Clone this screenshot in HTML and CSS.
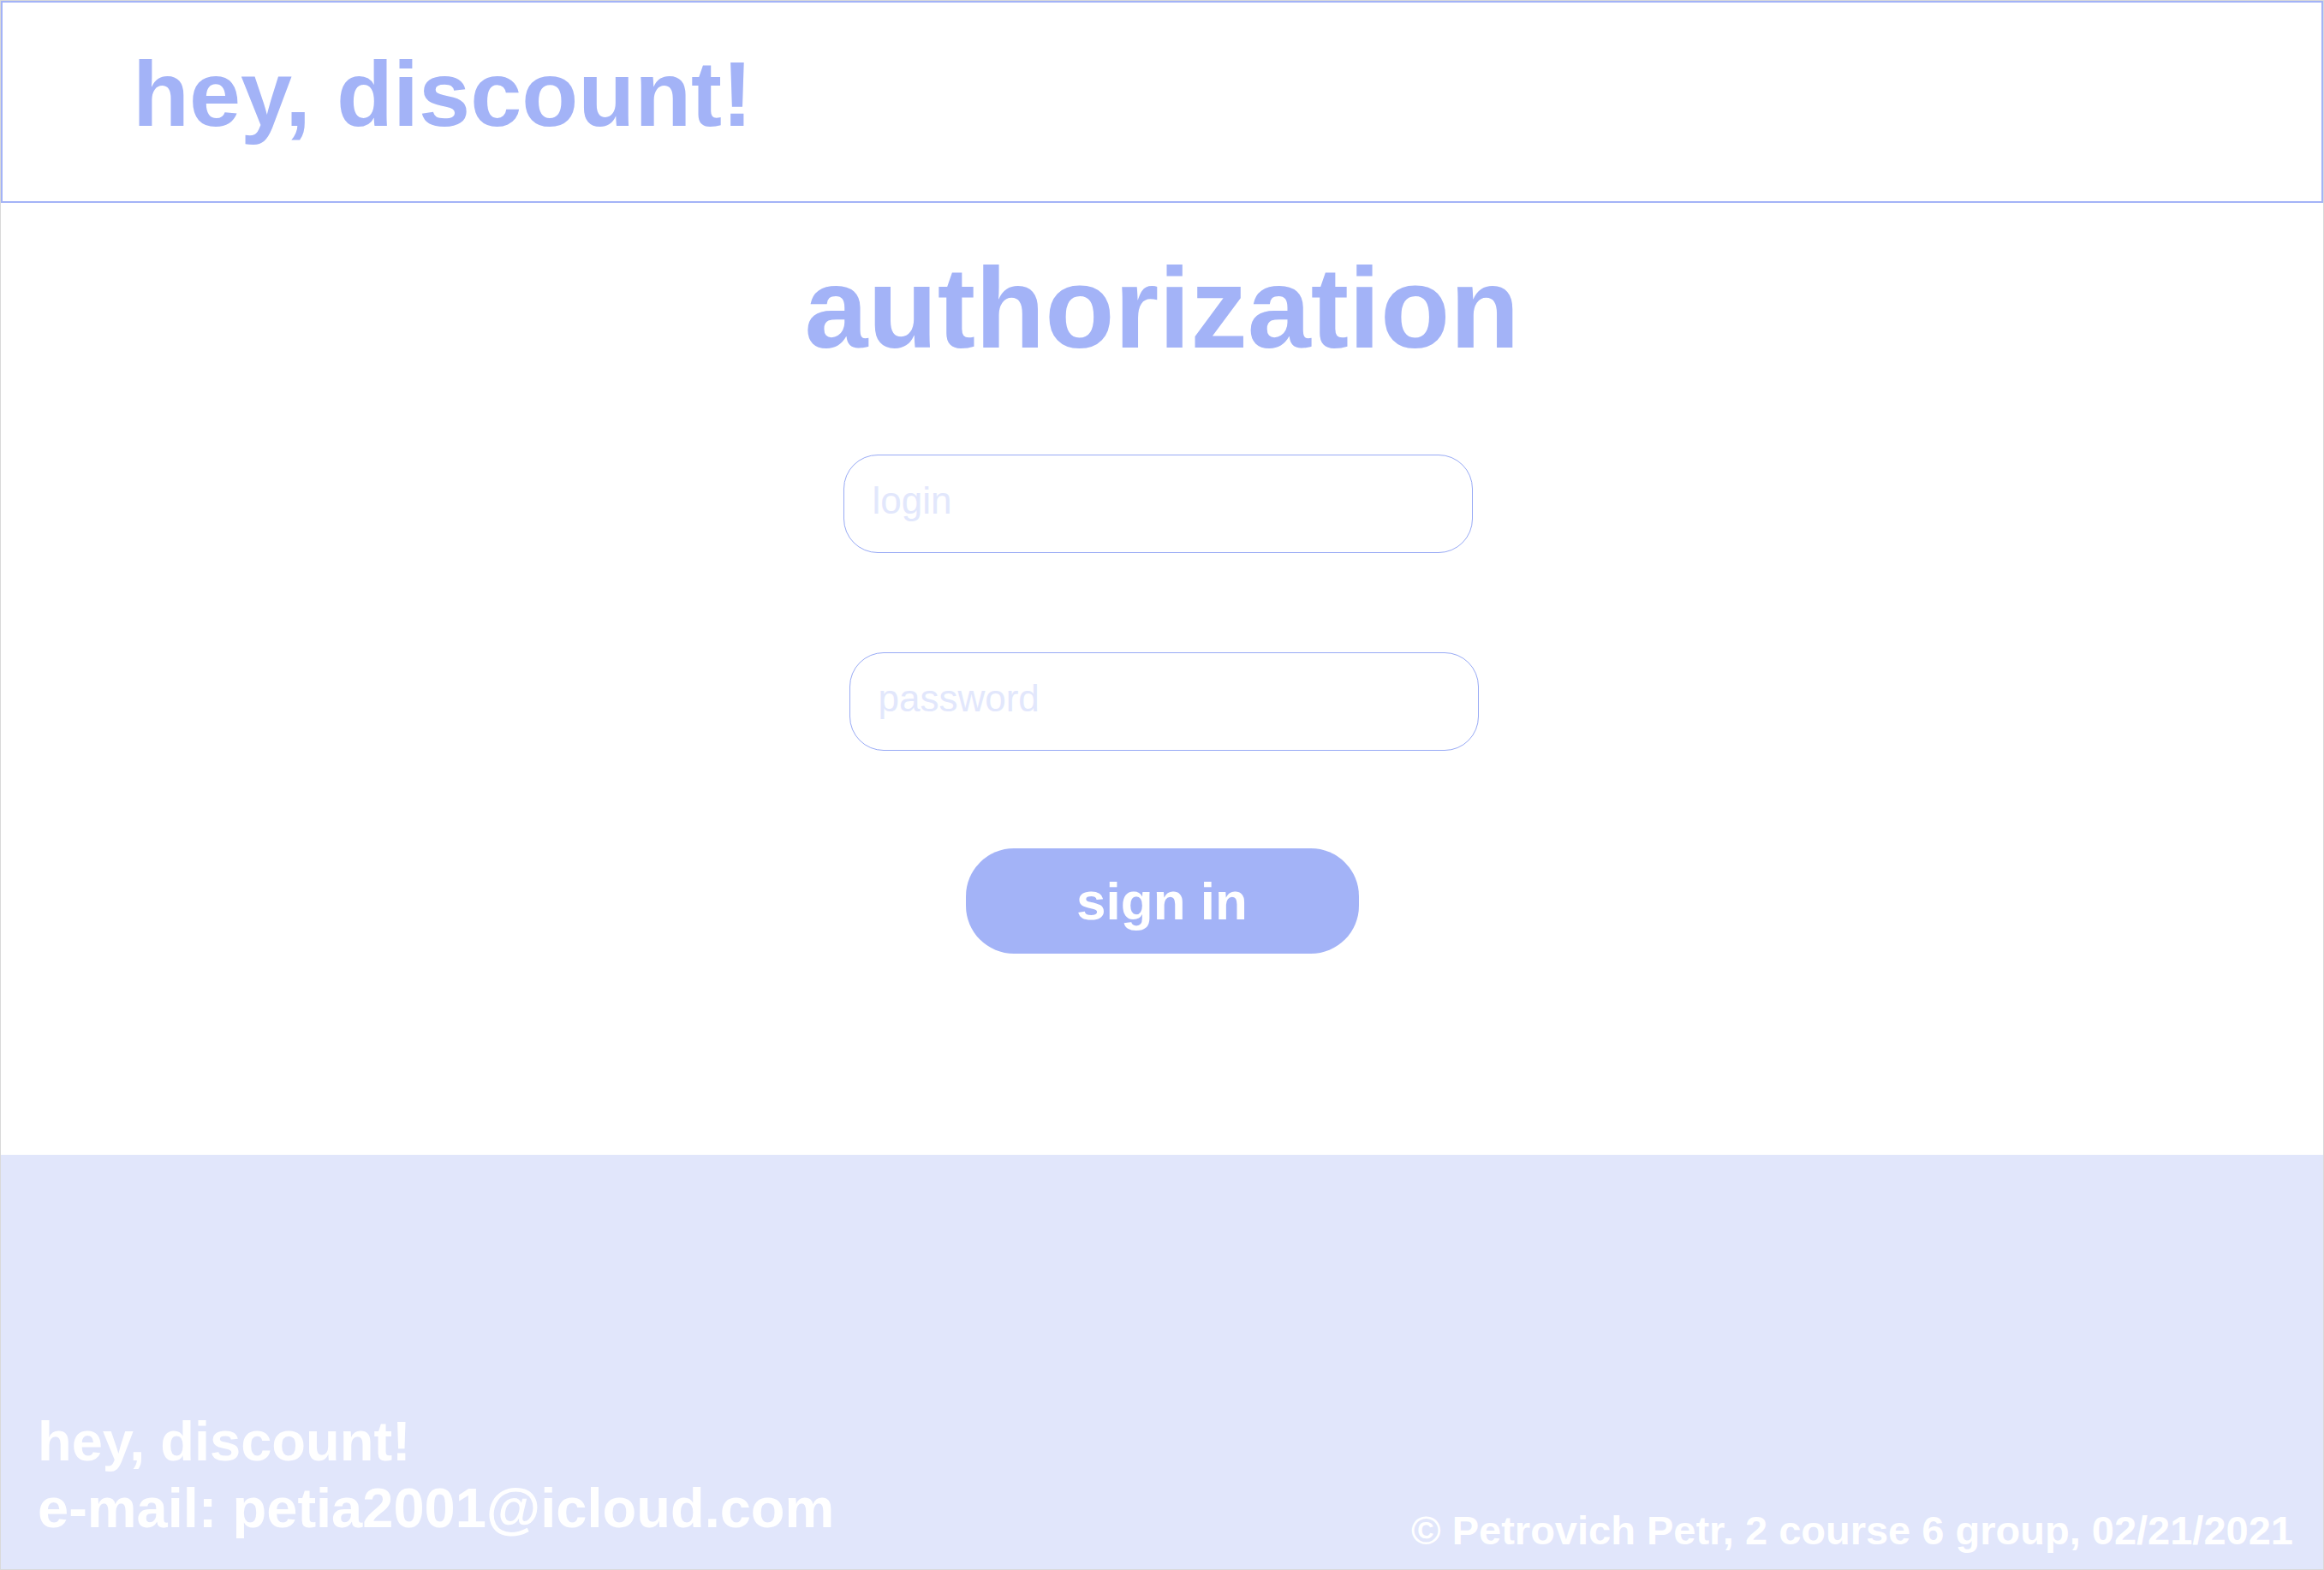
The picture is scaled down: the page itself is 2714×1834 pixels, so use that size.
FILE: index.html
```html
<!DOCTYPE html>
<html lang="en">
<head>
<meta charset="utf-8">
<title>hey, discount! — authorization</title>
<link rel="stylesheet" href="styles.css">
</head>
<body>
<div class="page">
  <header class="site-header">
    <div class="logo">hey, discount!</div>
  </header>
  <main class="auth">
    <h1 class="auth-title">authorization</h1>
    <form class="auth-form">
      <input class="field field-login" type="text" placeholder="login">
      <input class="field field-pass" type="password" placeholder="password">
      <button class="btn" type="button">sign in</button>
    </form>
  </main>
  <footer class="site-footer">
    <div class="footer-info">
      <div class="footer-line">hey, discount!</div>
      <div class="footer-line">e-mail: petia2001@icloud.com</div>
    </div>
    <div class="copyright">© Petrovich Petr, 2 course 6 group, 02/21/2021</div>
  </footer>
</div>
</body>
</html>
```
FILE: styles.css
```css
* { box-sizing: border-box; }
html, body {
  margin: 0;
  padding: 0;
  background: #ffffff;
}
body {
  width: 2714px;
  height: 1834px;
  font-family: "Liberation Sans", Arial, sans-serif;
}
.page {
  width: 2714px;
  height: 1834px;
  border: 1px solid #d9d9d9;
  display: flex;
  flex-direction: column;
}
.site-header {
  flex: none;
  height: 236px;
  border: 2px solid #a3b3f7;
  padding: 53px 0 0 152px;
}
.logo {
  font-size: 108px;
  line-height: 1;
  font-weight: 700;
  color: #a3b3f7;
}
.auth {
  flex: 1;
  display: flex;
  flex-direction: column;
  align-items: center;
}
.auth-title {
  margin: 57px 0 0;
  font-size: 133px;
  line-height: 1;
  font-weight: 700;
  color: #a3b3f7;
}
.auth-form {
  display: flex;
  flex-direction: column;
  align-items: center;
  margin-top: 104px;
}
.field {
  width: 735px;
  height: 115px;
  border: 1.5px solid #98aaf5;
  border-radius: 40px;
  padding: 0 33px 7px;
  font-family: "Liberation Sans", Arial, sans-serif;
  font-size: 44px;
  color: #6b7bd6;
  background: #ffffff;
  outline: none;
}
.field::placeholder {
  color: #e2e7fc;
  opacity: 1;
}
.field-login {
  margin-left: -5px;
  margin-right: 5px;
}
.field-pass {
  margin-top: 116px;
  margin-left: 2px;
  margin-right: -2px;
}
.btn {
  margin-top: 114px;
  width: 459px;
  height: 123px;
  border: none;
  border-radius: 56px;
  background: #a3b3f7;
  color: #ffffff;
  font-family: "Liberation Sans", Arial, sans-serif;
  font-size: 62px;
  font-weight: 700;
  line-height: 1;
  padding: 0;
  cursor: pointer;
}
.site-footer {
  flex: none;
  height: 484px;
  background: #e1e6fb;
  display: flex;
  justify-content: space-between;
  align-items: flex-end;
  padding: 0 35px 32px 43px;
  color: #ffffff;
  font-weight: 700;
}
.footer-line {
  font-size: 65px;
  line-height: 78px;
}
.copyright {
  font-size: 47px;
  line-height: 26px;
}
```
